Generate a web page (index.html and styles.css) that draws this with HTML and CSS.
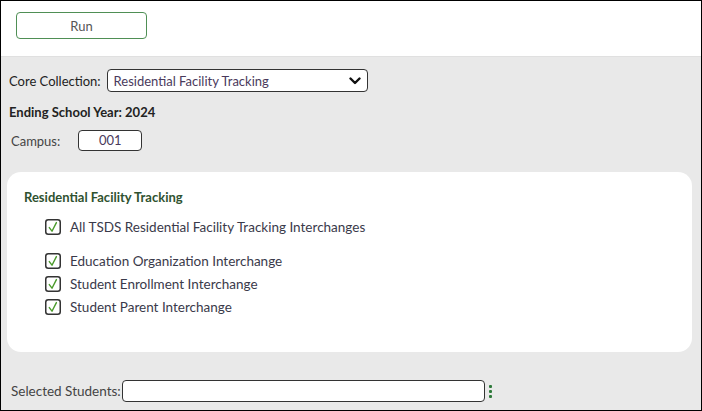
FILE: index.html
```html
<!DOCTYPE html>
<html>
<head>
    <meta charset='UTF-8'>
    <title>Core Collection</title>
    <link rel="stylesheet" href="styles.css">
</head>
<body>
    <div class='frame'>
        <div class='toolbar'>
            <button class='run-btn'>Run</button>
        </div>

        <div class='content'>
            <div class='field-row collection-row'>
                <label class='field-label'>Core Collection:</label>
                <div class='select-box'>
                    <span>Residential Facility Tracking</span>
                    <svg class='chevron' width='12' height='8' viewBox='0 0 12 8'>
                        <path d='M1.5 1.5 L6 6 L10.5 1.5' fill='none' stroke='#111' stroke-width='2.4' stroke-linecap='round' stroke-linejoin='round'/>
                    </svg>
                </div>
            </div>

            <div class='year-row'>Ending School Year: 2024</div>

            <div class='field-row campus-row'>
                <label class='field-label light'>Campus:</label>
                <div class='campus-box'>001</div>
            </div>

            <!-- Interchange selection panel -->
            <div class='panel'>
                <h2 class='panel-title'>Residential Facility Tracking</h2>
                <div class='check-row all-row'>
                    <span class='check'><svg width='16' height='16' viewBox='0 0 16 16'><rect x='0.75' y='0.75' width='14.5' height='14.5' rx='2.5' fill='#fff' stroke='#333' stroke-width='1.5'/><path d='M4.3 8.6 L7 12.2 L11.4 3.6' fill='none' stroke='#4a9a2a' stroke-width='1.4' stroke-linecap='round' stroke-linejoin='round'/></svg></span>
                    <span>All TSDS Residential Facility Tracking Interchanges</span>
                </div>
                <div class='check-row'>
                    <span class='check'><svg width='16' height='16' viewBox='0 0 16 16'><rect x='0.75' y='0.75' width='14.5' height='14.5' rx='2.5' fill='#fff' stroke='#333' stroke-width='1.5'/><path d='M4.3 8.6 L7 12.2 L11.4 3.6' fill='none' stroke='#4a9a2a' stroke-width='1.4' stroke-linecap='round' stroke-linejoin='round'/></svg></span>
                    <span>Education Organization Interchange</span>
                </div>
                <div class='check-row'>
                    <span class='check'><svg width='16' height='16' viewBox='0 0 16 16'><rect x='0.75' y='0.75' width='14.5' height='14.5' rx='2.5' fill='#fff' stroke='#333' stroke-width='1.5'/><path d='M4.3 8.6 L7 12.2 L11.4 3.6' fill='none' stroke='#4a9a2a' stroke-width='1.4' stroke-linecap='round' stroke-linejoin='round'/></svg></span>
                    <span>Student Enrollment Interchange</span>
                </div>
                <div class='check-row'>
                    <span class='check'><svg width='16' height='16' viewBox='0 0 16 16'><rect x='0.75' y='0.75' width='14.5' height='14.5' rx='2.5' fill='#fff' stroke='#333' stroke-width='1.5'/><path d='M4.3 8.6 L7 12.2 L11.4 3.6' fill='none' stroke='#4a9a2a' stroke-width='1.4' stroke-linecap='round' stroke-linejoin='round'/></svg></span>
                    <span>Student Parent Interchange</span>
                </div>
            </div>

            <div class='field-row students-row'>
                <label class='field-label light'>Selected Students:</label>
                <div class='students-box'></div>
                <span class='kebab'><i></i><i></i><i></i></span>
            </div>
        </div>
    </div>
</body>
</html>
```

FILE: styles.css
```css
body {
    margin: 0;
    font-family: Lato, "Open Sans", sans-serif;
    font-size: 13px;
    color: #222;
}

.frame {
    width: 702px;
    height: 411px;
    box-sizing: border-box;
    border: 1px solid #000;
    display: flex;
    flex-direction: column;
    overflow: hidden;
}

.toolbar {
    background: #fff;
    height: 56px;
    padding: 11px 0 0 15px;
    box-sizing: border-box;
    border-bottom: 1px solid #e0e0e0;
}

.run-btn {
    width: 131px;
    height: 27px;
    background: #fff;
    border: 1px solid #4f8f55;
    border-radius: 4px;
    font-family: inherit;
    font-size: 13px;
    color: #555;
    cursor: pointer;
}

.content {
    flex: 1;
    background: #e9e9e9;
    padding: 12px 10px 0 6px;
}

.field-row {
    display: flex;
    align-items: center;
}

.field-label {
    color: #222;
}

.field-label.light {
    color: #444;
}

.collection-row {
    height: 23px;
    padding-left: 2px;
}

.select-box {
    margin-left: 6px;
    width: 261px;
    height: 23px;
    box-sizing: border-box;
    border: 1.5px solid #333;
    border-radius: 4px;
    background: #fff;
    display: flex;
    align-items: center;
    justify-content: space-between;
    padding: 0 6px 0 6px;
    color: #4a3a5c;
}

.year-row {
    font-weight: bold;
    color: #222;
    margin-top: 12px;
    padding-left: 2px;
    line-height: 16px;
}

.campus-row {
    margin-top: 10px;
    height: 21px;
    padding-left: 4px;
}

.campus-box {
    margin-left: 18px;
    width: 64px;
    height: 21px;
    box-sizing: border-box;
    border: 1.5px solid #333;
    border-radius: 4px;
    background: #fff;
    text-align: center;
    line-height: 18px;
    color: #4a3a5c;
}

.panel {
    margin-top: 21px;
    width: 685px;
    height: 180px;
    box-sizing: border-box;
    background: #fff;
    border-radius: 14px;
    padding: 17px 0 0 17px;
}

.panel-title {
    margin: 0 0 10px 0;
    font-size: 13px;
    font-weight: bold;
    color: #2f5230;
    line-height: 16px;
}

.check-row {
    display: flex;
    align-items: center;
    height: 23px;
    padding-left: 21px;
    font-size: 13.5px;
    color: #3a3a4a;
}

.check-row.all-row {
    margin-bottom: 11px;
}

.check {
    width: 16px;
    height: 16px;
    margin-right: 9px;
    display: flex;
}

.students-row {
    margin-top: 28px;
    padding-left: 4px;
    font-size: 13.5px;
}

.students-box {
    margin-left: 1px;
    width: 363px;
    height: 22px;
    box-sizing: border-box;
    border: 1.5px solid #333;
    border-radius: 4px;
    background: #fff;
}

.kebab {
    margin-left: 4px;
    display: flex;
    flex-direction: column;
    gap: 2px;
}

.kebab i {
    width: 3px;
    height: 3px;
    background: #2e7a3a;
    border-radius: 1px;
}
```
